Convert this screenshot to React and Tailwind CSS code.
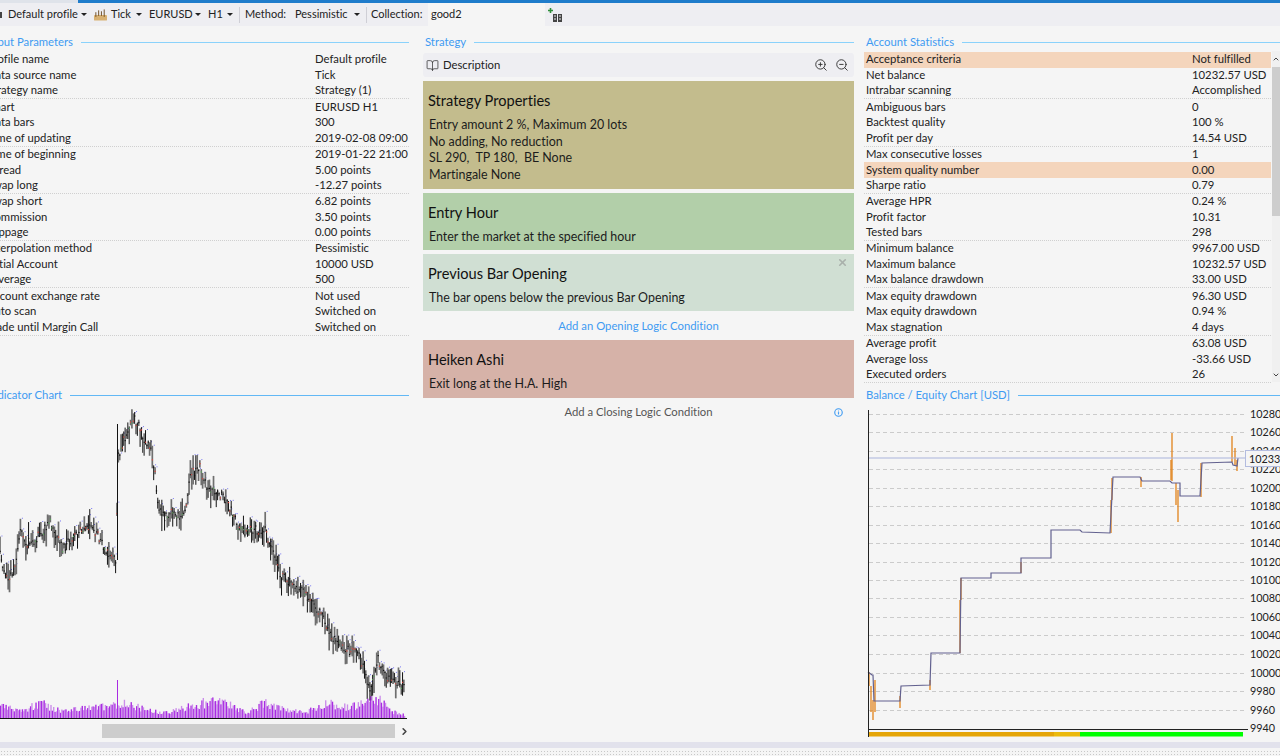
import React from "react";
import { ChevronRight, ChevronUp, ChevronDown, X, ZoomIn, ZoomOut, BookOpen, Info } from "lucide-react";

const inputRows = [
  ["Profile name", "Default profile"],
  ["Data source name", "Tick"],
  ["Strategy name", "Strategy (1)"],
  ["Chart", "EURUSD H1"],
  ["Data bars", "300"],
  ["Time of updating", "2019-02-08 09:00"],
  ["Time of beginning", "2019-01-22 21:00"],
  ["Spread", "5.00 points"],
  ["Swap long", "-12.27 points"],
  ["Swap short", "6.82 points"],
  ["Commission", "3.50 points"],
  ["Slippage", "0.00 points"],
  ["Interpolation method", "Pessimistic"],
  ["Initial Account", "10000 USD"],
  ["Leverage", "500"],
  ["Account exchange rate", "Not used"],
  ["Auto scan", "Switched on"],
  ["Trade until Margin Call", "Switched on"],
];

const statRows = [
  ["Acceptance criteria", "Not fulfilled", true],
  ["Net balance", "10232.57 USD"],
  ["Intrabar scanning", "Accomplished"],
  ["Ambiguous bars", "0"],
  ["Backtest quality", "100 %"],
  ["Profit per day", "14.54 USD"],
  ["Max consecutive losses", "1"],
  ["System quality number", "0.00", true],
  ["Sharpe ratio", "0.79"],
  ["Average HPR", "0.24 %"],
  ["Profit factor", "10.31"],
  ["Tested bars", "298"],
  ["Minimum balance", "9967.00 USD"],
  ["Maximum balance", "10232.57 USD"],
  ["Max balance drawdown", "33.00 USD"],
  ["Max equity drawdown", "96.30 USD"],
  ["Max equity drawdown", "0.94 %"],
  ["Max stagnation", "4 days"],
  ["Average profit", "63.08 USD"],
  ["Average loss", "-33.66 USD"],
  ["Executed orders", "26"],
];

const pricePath = [
  [0, 555], [8, 585], [14, 570], [20, 532], [27, 543], [33, 543], [50, 523], [63, 550], [77, 533], [87, 525], [97, 535],
  [110, 558], [116, 562], [118, 458], [130, 424], [135, 420], [145, 440], [150, 447], [155, 470], [158, 510], [165, 517],
  [175, 512], [180, 520], [187, 505], [190, 475], [200, 468], [208, 490], [225, 497], [240, 532], [265, 530], [280, 575],
  [300, 590], [320, 612], [335, 642], [345, 650], [360, 656], [370, 695], [378, 660], [388, 680], [405, 686],
];

const volumeShape = [
  [0, 12], [20, 7], [40, 15], [60, 7], [80, 10], [100, 11], [125, 15], [150, 7], [170, 6], [190, 13], [210, 17],
  [230, 15], [245, 5], [265, 16], [285, 8], [305, 6], [325, 16], [345, 11], [365, 15], [378, 20], [390, 7], [405, 3],
];

const yLabels = [
  [10280, 414], [10260, 432], [10240, 451], [10220, 469], [10200, 488], [10180, 506], [10160, 525], [10140, 543], [10120, 562],
  [10100, 580], [10080, 598], [10060, 617], [10040, 635], [10020, 654], [10000, 673], [9980, 691], [9960, 710], [9940, 728],
];

const balanceLine = "868,672 872,675 873,675 874,701 900,701 901,686 930,685 931,653 960,653 961,578 991,578 991,573 1021,573 1021,558 1051,558 1051,530 1080,530 1082,532 1110,533 1113,477 1140,477 1142,481 1170,481 1172,483 1180,483 1180,496 1200,496 1202,463 1232,462 1233,465 1237,466 1238,458";

const equitySpikes = [
  [869, 672, 686], [871, 686, 712], [873, 700, 720], [875, 680, 712], [900, 696, 708], [930, 680, 690], [960, 600, 653],
  [961, 578, 600], [1021, 562, 573], [1111, 500, 533], [1112, 478, 500], [1141, 477, 487], [1172, 433, 481], [1171, 460, 480],
  [1176, 483, 505], [1178, 490, 522], [1201, 463, 497], [1232, 436, 462], [1235, 448, 466], [1237, 460, 471],
];

// cheap seeded noise so the candles stay the same on every load
function noise(i) {
  const v = Math.sin(i * 127.1 + 3.7) * 43758.5453;
  return v - Math.floor(v);
}

function lerp(points, x) {
  for (let i = 1; i < points.length; i++) {
    if (x <= points[i][0]) {
      const [x0, y0] = points[i - 1];
      const [x1, y1] = points[i];
      return y0 + ((y1 - y0) * (x - x0)) / (x1 - x0);
    }
  }
  return points[points.length - 1][1];
}

function IndicatorChart() {
  const bars = [];
  for (let x = 0, i = 0; x <= 405; x += 1.36, i++) {
    bars.push({ x, i, mid: lerp(pricePath, x) + (noise(i) - 0.5) * 9, vol: lerp(volumeShape, x) * (0.6 + noise(i + 400) * 0.7) });
  }
  return (
    <svg viewBox="0 405 417 320" className="block h-[320px] w-[417px]">
      {bars.map((b) => {
        const spread = noise(b.i + 100);
        const high = b.mid - 2 - spread * spread * 15;
        const low = b.mid + 2 + noise(b.i + 200) * noise(b.i + 200) * 15;
        const dark = noise(b.i + 500) > 0.55;
        const accent = noise(b.i + 600);
        return (
          <g key={b.i}>
            <line x1={b.x} x2={b.x} y1={high} y2={low} stroke={dark ? "#111" : "#6f6f6f"} strokeWidth={dark ? 1 : 1.7} />
            <rect x={b.x - 0.5} y={b.mid - 1} width="1.2" height="1.2" fill={accent > 0.8 ? "#e2453c" : accent < 0.1 ? "#58a858" : "#111"} />
            {accent > 0.45 ? <rect x={b.x + 1.5} y={high - 1} width="0.9" height="0.9" fill="#5a5af0" /> : null}
            <rect x={b.x} y={718 - b.vol} width="1.36" height={b.vol} fill={b.i % 2 ? "#cb8dea" : "#a92be2"} />
          </g>
        );
      })}
      <line x1="117.5" x2="117.5" y1="424" y2="560" stroke="#111" strokeWidth="1" />
      <line x1="117.5" x2="117.5" y1="680" y2="718" stroke="#a92be2" strokeWidth="1" />
      <line x1="0" x2="407" y1="718.5" y2="718.5" stroke="#111" strokeWidth="1" />
    </svg>
  );
}

function BalanceChart() {
  return (
    <svg viewBox="860 405 420 335" className="absolute left-0 top-0 h-[335px] w-[420px]">
      {yLabels.slice(0, -1).map(([v, y]) => (
        <line key={v} x1="869" x2="1245" y1={y + 0.5} y2={y + 0.5} stroke="#cbcbcb" strokeDasharray="4 3" />
      ))}
      {equitySpikes.map(([x, a, b], i) => (
        <line key={i} x1={x} x2={x} y1={a} y2={b} stroke="#e0821a" strokeWidth="1.3" />
      ))}
      <polyline points={balanceLine} fill="none" stroke="#62618f" strokeWidth="1.2" />
      <line x1="869" x2="1246" y1="458" y2="458" stroke="#aab4dc" strokeWidth="1.2" />
      <line x1="868.5" x2="868.5" y1="410" y2="737" stroke="#222" />
      <line x1="869" x2="1248" y1="729.5" y2="729.5" stroke="#222" />
      <rect x="869" y="732" width="185" height="4.5" fill="#e5a508" />
      <rect x="1054" y="732" width="26" height="4.5" fill="#ebb90c" />
      <rect x="1080" y="732" width="163" height="4.5" fill="#00ff00" />
    </svg>
  );
}

function SectionHeader({ title, thin }) {
  return (
    <div className="flex h-[16px] items-center gap-[8px]">
      <span className="whitespace-nowrap text-[#3f9bf2]">{title}</span>
      <div className={`mt-px flex-1 ${thin ? "h-px bg-[#62b8f5]" : "h-[1.5px] bg-[#8ad2fb]"}`} />
    </div>
  );
}

function Row({ label, value, highlight, divider, valueLeft, labelClass }) {
  return (
    <div className={`relative flex h-[15.75px] items-center whitespace-nowrap ${highlight ? "bg-[#f4d5bc]" : ""} ${divider ? "border-b border-dotted border-[#d0d0d0]" : ""}`}>
      <span className={`pl-[2px] ${labelClass || ""}`} style={{ width: valueLeft }}>{label}</span>
      <span>{value}</span>
    </div>
  );
}

function Card({ title, bg, lines, close, h }) {
  return (
    <div className={`relative px-[5px] ${bg} ${h}`}>
      <div className="pt-[10px] text-[14.6px] leading-[20px] text-[#111]">{title}</div>
      <div className="mt-[6px] pl-px text-[12.45px] text-[#1c1c1c]">
        {lines.map((line) => <div key={line} className="h-[16.6px] leading-[16.6px] whitespace-pre">{line}</div>)}
      </div>
      {close ? <X className="absolute right-[6px] top-[3px] h-[11px] w-[11px] text-[#a9b0ab]" strokeWidth={3.5} /> : null}
    </div>
  );
}

function Caret({ className }) {
  return <span className={`inline-block h-0 w-0 border-x-[3px] border-t-[3px] border-x-transparent border-t-[#222] ${className}`} />;
}

function Sep({ className }) {
  return <div className={`h-[16px] w-px bg-[#cfcfd6] ${className}`} />;
}

export default function App() {
  return (
    <div className="relative h-[756px] w-[1280px] overflow-hidden bg-[#f5f5f5] text-[11.3px] text-[#222] [font-family:Lato,sans-serif] [font-variant-ligatures:none]">
      <div className="flex h-[3px]">
        <div className="w-[78px] bg-[#dfe3ea]" />
        <div className="flex-1 bg-[#1f7ccb]" />
      </div>
      <div className="flex h-[23px] items-center bg-[#eeeef2] text-[11px] whitespace-nowrap">
        <div className="mr-[6px] h-[6px] w-[2px] bg-[#444]" />
        <span className="w-[73px]">Default profile</span><Caret />
        <svg viewBox="0 0 14 12" className="ml-[7px] h-[12px] w-[13px]">
          <rect x="0" y="6" width="14" height="6" rx="1" fill="#d8b173" />
          <path d="M2 8V3M5 7V1M8 7V2M11 8V0" stroke="#6b4a22" strokeWidth="1" />
        </svg>
        <span className="ml-[4px] w-[25px]">Tick</span><Caret />
        <span className="ml-[7px] w-[46px]">EURUSD</span><Caret />
        <span className="ml-[7px] w-[19px]">H1</span><Caret />
        <Sep className="ml-[6px]" />
        <span className="ml-[5px] w-[50px]">Method:</span>
        <span className="w-[59px]">Pessimistic</span><Caret />
        <Sep className="ml-[6px]" />
        <span className="ml-[4px] w-[57px]">Collection:</span>
        <div className="flex h-[23px] w-[117px] items-center bg-[#f5f5f5] pl-[3px]">good2</div>
        <svg viewBox="0 0 14 14" className="ml-[3px] h-[14px] w-[14px]">
          <path d="M2.5 0v5M0 2.5h5" stroke="#2f8f3a" strokeWidth="1.6" />
          <path d="M5 6h4v8H5zM10 6h4v8h-4z" fill="#444" />
          <path d="M6 8h2M6 11h2M11 8h2M11 11h2" stroke="#eee" strokeWidth="1" />
        </svg>
      </div>

      <div className="flex pt-[8px]">
        <div className="ml-[-8px] flex w-[417px] flex-col">
          <div className="ml-[-4px]"><SectionHeader title="Input Parameters" /></div>
          <div className="mt-[2px] h-[335px]">
            {inputRows.map(([label, value], i) => (
              <Row key={i} label={label} value={value} valueLeft="330px" labelClass="ml-[-7px]" divider={i % 3 === 2} />
            ))}
          </div>
          <div className="ml-[-4px]"><SectionHeader title="Indicator Chart" thin /></div>
          <div className="ml-[8px] mt-[2px]"><IndicatorChart /></div>
        </div>

        <div className="ml-[14px] flex w-[431px] flex-col">
          <div className="pl-[2px]"><SectionHeader title="Strategy" /></div>
          <div className="mt-[3px] flex h-[24px] items-center rounded-[3px] bg-[#eeeef2] pl-[3px] pr-[5px]">
            <BookOpen className="h-[13px] w-[13px] text-[#333]" strokeWidth={1.4} />
            <span className="ml-[4px]">Description</span>
            <ZoomIn className="ml-auto h-[14px] w-[14px] text-[#333]" strokeWidth={1.6} />
            <ZoomOut className="ml-[7px] h-[14px] w-[14px] text-[#333]" strokeWidth={1.6} />
          </div>
          <div className="mt-[4px] flex flex-col gap-[4px]">
            <Card title="Strategy Properties" bg="bg-[#c3bc8d]" h="h-[108px]" lines={["Entry amount 2 %, Maximum 20 lots", "No adding, No reduction", "SL 290,  TP 180,  BE None", "Martingale None"]} />
            <Card title="Entry Hour" bg="bg-[#b2cfa9]" h="h-[57px]" lines={["Enter the market at the specified hour"]} />
            <Card title="Previous Bar Opening" bg="bg-[#d0dfd3]" h="h-[57px]" close lines={["The bar opens below the previous Bar Opening"]} />
          </div>
          <div className="flex h-[29px] items-center justify-center pt-px text-[#3f9bf2]">Add an Opening Logic Condition</div>
          <Card title="Heiken Ashi" bg="bg-[#d6b2a8]" h="h-[58px]" lines={["Exit long at the H.A. High"]} />
          <div className="relative flex h-[29px] items-center justify-center text-[#555]">
            Add a Closing Logic Condition
            <Info className="absolute right-[11px] top-[10px] h-[9px] w-[9px] text-[#3f9bf2]" strokeWidth={3} />
          </div>
        </div>

        <div className="ml-[10px] flex w-[416px] flex-col">
          <div className="pl-[2px]"><SectionHeader title="Account Statistics" /></div>
          <div className="mt-[1px] flex h-[331px]">
            <div className="w-[407px] shrink-0 pt-px">
              {statRows.map(([label, value, highlight], i) => (
                <Row key={i} label={label} value={value} valueLeft="328px" highlight={highlight} divider={i % 3 === 2} />
              ))}
            </div>
            <div className="ml-[1px] flex w-[8px] flex-col bg-[#f0f0f0]">
              <ChevronUp className="h-[16px] w-[8px] shrink-0 text-[#444]" strokeWidth={3} />
              <div className="h-[149px] bg-[#cdcdcd]" />
              <div className="flex-1" />
              <ChevronDown className="h-[14px] w-[8px] shrink-0 text-[#444]" strokeWidth={3} />
            </div>
          </div>
          <div className="mt-[5px] pl-[2px]"><SectionHeader title="Balance / Equity Chart [USD]" thin /></div>
        </div>
      </div>

      <div className="pointer-events-none absolute left-0 top-[405px] h-[335px] w-[1280px] overflow-hidden">
        <div className="absolute left-[860px] top-0 h-[335px] w-[420px]">
          <BalanceChart />
          {yLabels.map(([v, y]) => (
            <span key={v} className="absolute left-[389px] h-[16px] bg-[#f5f5f5] pl-px text-[10.8px] leading-[16px]" style={{ top: y - 405 - 8 }}>{v}</span>
          ))}
          <span className="absolute left-[385px] top-[45px] h-[17px] w-[36px] border border-[#b3bcdf] bg-[#f5f5f5] pl-[3px] text-[10.8px] leading-[15px]">10233</span>
        </div>
      </div>

      <div className="absolute left-0 top-[724px] flex h-[14px] w-[410px] items-center">
        <div className="ml-[102px] h-[14px] w-[293px] bg-[#cdcdcd]" />
        <ChevronRight className="ml-[4px] h-[11px] w-[11px] text-[#444]" strokeWidth={3.5} />
      </div>

      <div className="absolute bottom-0 left-0 h-[14px] w-[1280px] bg-[#f5f5f5]">
        <div className="h-[6px] bg-[#e2e2ec]" />
        <div className="mt-[2px] h-[6px] bg-[radial-gradient(#c8c8c8_1px,transparent_1px)] bg-[length:3px_3px]" />
      </div>
    </div>
  );
}
